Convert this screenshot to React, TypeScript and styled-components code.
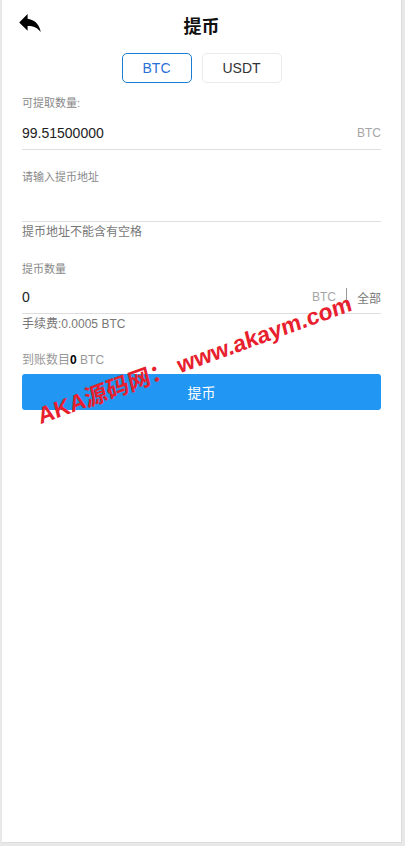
import React, { useState } from "react";
import styled, { createGlobalStyle } from "styled-components";

const GlobalStyle = createGlobalStyle`
  html, body {
    margin: 0;
    padding: 0;
    background: #e8e8e8;
    font-family: "Liberation Sans", Arial, "Noto Sans CJK SC", sans-serif;
  }
  * { box-sizing: border-box; }
`;

const Page = styled.div`
  position: relative;
  width: 400px;
  height: 843px;
  margin-left: 2px;
  background: #fff;
  border-right: 1px solid #dcdcdc;
  border-bottom: 1px solid #dcdcdc;
`;

const Header = styled.div`
  position: relative;
  height: 49px;
  display: flex;
  align-items: center;
  justify-content: center;
`;

const BackButton = styled.button`
  position: absolute;
  left: 16px;
  top: 12px;
  border: 0;
  background: none;
  padding: 0;
  display: flex;
`;

const Title = styled.h1`
  margin: 0;
  font-size: 18px;
  font-weight: bold;
  color: #111;
`;

const Tabs = styled.div`
  display: flex;
  justify-content: center;
  gap: 10px;
  margin-top: 4px;
`;

const Tab = styled.button<{ $active?: boolean; $w: number }>`
  width: ${(p) => p.$w}px;
  height: 30px;
  border-radius: 5px;
  background: #fff;
  font-family: inherit;
  font-size: 14px;
  border: 1px solid ${(p) => (p.$active ? "#1a7fd4" : "#eaeaea")};
  color: ${(p) => (p.$active ? "#2a6fd6" : "#333")};
`;

const Form = styled.div`
  padding: 12px 20px 0;
`;

const Label = styled.div`
  font-size: 11px;
  color: #888;
  line-height: 16px;
`;

const Field = styled.div<{ $h: number; $pt?: number }>`
  display: flex;
  align-items: center;
  height: ${(p) => p.$h}px;
  padding-top: ${(p) => p.$pt ?? 0}px;
  border-bottom: 1px solid #dedede;
`;

const Value = styled.div`
  flex: 1;
  font-size: 14px;
  color: #222;
`;

const Unit = styled.span`
  font-size: 12px;
  color: #a6a6a6;
`;

const Divider = styled.span`
  width: 1px;
  height: 18px;
  background: #999;
  margin: 0 10px;
`;

const AllLink = styled.span`
  font-size: 12px;
  color: #777;
`;

const Hint = styled.div`
  font-size: 12px;
  color: #777;
  line-height: 20px;
`;

const Section = styled.div<{ $top: number }>`
  margin-top: ${(p) => p.$top}px;
`;

const Arrival = styled.div`
  font-size: 12px;
  color: #999;
  line-height: 16px;
  b { color: #000; }
`;

const Submit = styled.button`
  display: block;
  width: 100%;
  height: 36px;
  margin-top: 6px;
  border: 0;
  border-radius: 3px;
  background: #2196f2;
  color: #fff;
  font-family: inherit;
  font-size: 14px;
`;

const Watermark = styled.div`
  position: absolute;
  left: 40px;
  top: 397px;
  transform-origin: 0 100%;
  transform: rotate(-20deg) skewX(-6deg);
  white-space: nowrap;
  font-size: 23px;
  font-weight: bold;
  color: #e8202e;
  pointer-events: none;
`;

export default function App() {
  const [coin, setCoin] = useState("BTC");
  return (
    <Page>
      <GlobalStyle />
      <Header>
        <BackButton>
          <svg width="24" height="22" viewBox="2 4 20 17">
            <path d="M10 9V5l-7 7 7 7v-4.1c5 0 8.5 1.6 11 5.1-1-5-4-10-11-11z" fill="#000" />
          </svg>
        </BackButton>
        <Title>提币</Title>
      </Header>
      <Tabs>
        <Tab $w={70} $active={coin === "BTC"} onClick={() => setCoin("BTC")}>BTC</Tab>
        <Tab $w={80} $active={coin === "USDT"} onClick={() => setCoin("USDT")}>USDT</Tab>
      </Tabs>
      <Form>
        <Label>可提取数量:</Label>
        <Field $h={39} $pt={6}>
          <Value>99.51500000</Value>
          <Unit>{coin}</Unit>
        </Field>
        <Section $top={19}>
          <Label>请输入提币地址</Label>
          <Field $h={37} />
          <Hint>提币地址不能含有空格</Hint>
        </Section>
        <Section $top={19}>
          <Label>提币数量</Label>
          <Field $h={37} $pt={4}>
            <Value>0</Value>
            <Unit>{coin}</Unit>
            <Divider />
            <AllLink>全部</AllLink>
          </Field>
          <Hint>手续费:0.0005 {coin}</Hint>
        </Section>
        <Section $top={18}>
          <Arrival>
            到账数目<b>0</b> {coin}
          </Arrival>
          <Submit>提币</Submit>
        </Section>
      </Form>
      <Watermark>AKA源码网：&nbsp;www.akaym.com</Watermark>
    </Page>
  );
}
